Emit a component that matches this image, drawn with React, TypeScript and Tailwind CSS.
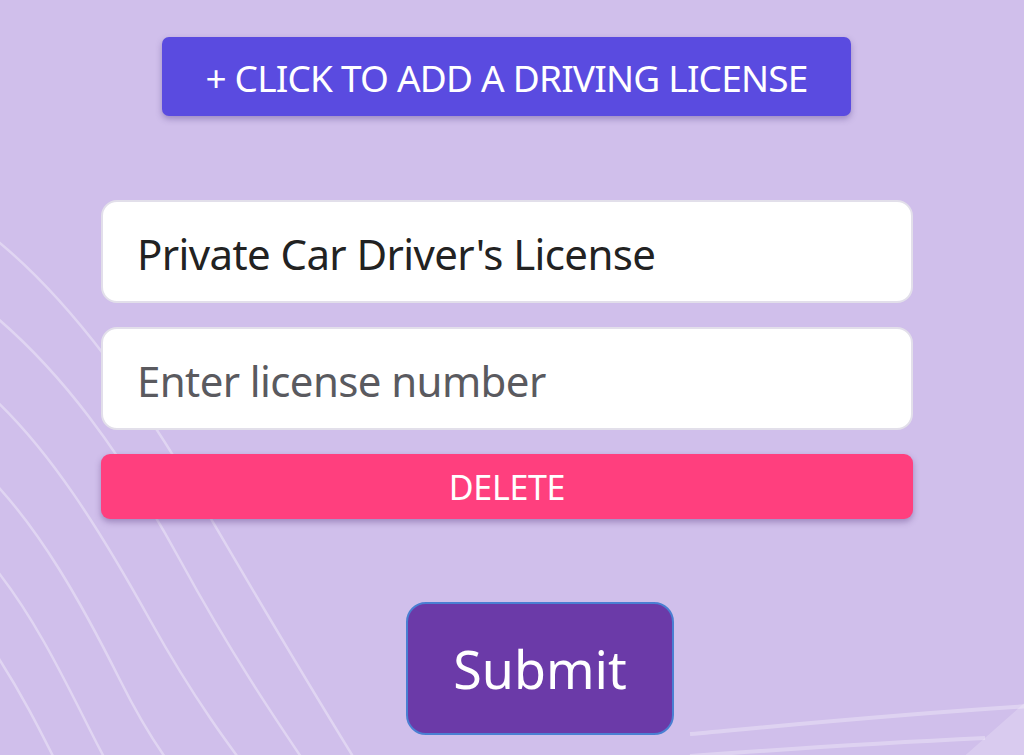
import React, { useState } from "react";

function Waves() {
  return (
    <svg className="pointer-events-none absolute inset-0 h-full w-full" viewBox="0 0 1024 755" preserveAspectRatio="none">
      <g fill="none" stroke="#ffffff" strokeOpacity="0.35" strokeWidth="2.5">
        <path d="M-10 235 C 60 290, 130 380, 200 500 S 330 720, 380 800" />
        <path d="M-10 312 C 60 370, 120 450, 180 560 S 290 740, 330 800" />
        <path d="M-10 395 C 50 450, 100 530, 150 620 S 240 760, 270 800" />
        <path d="M-10 478 C 40 530, 80 600, 120 680 S 190 790, 210 810" />
        <path d="M-10 562 C 30 610, 60 670, 90 730 S 130 800, 150 820" />
        <path d="M-10 645 C 20 690, 40 730, 60 770" />
      </g>
      <g fill="none" stroke="#ffffff" strokeOpacity="0.3" strokeWidth="4">
        <path d="M690 734 C 800 724, 900 714, 1030 706" />
        <path d="M690 756 C 800 748, 900 742, 985 738" />
      </g>
      <path d="M960 760 L 1030 698 L 1030 760 Z" fill="#ffffff" fillOpacity="0.2" />
    </svg>
  );
}

export default function App() {
  const [number, setNumber] = useState("");

  return (
    <div className="relative h-[755px] w-full overflow-hidden bg-[#d0bfeb] font-['Noto_Sans',sans-serif]">
      <Waves />
      <div className="relative flex flex-col items-start pt-[37px]">
        <button className="ml-[162px] flex h-[79px] w-[689px] items-center justify-center rounded-[7px] bg-[#5a4be0] pt-[2px] text-[37px] tracking-[-0.8px] text-white shadow-[0_3px_6px_rgba(60,40,120,0.35)]">
          + CLICK TO ADD A DRIVING LICENSE
        </button>

        <div className="ml-[101px] mt-[84px] flex w-[812px] flex-col gap-[24px]">
          <div className="flex h-[103px] items-center rounded-[16px] border-2 border-[#e2dfea] bg-white px-[34px] pt-[4px] text-[42px] tracking-[-0.6px] text-[#222222]">
            Private Car Driver's License
          </div>
          <input
            value={number}
            onChange={(e) => setNumber(e.target.value)}
            placeholder="Enter license number"
            className="h-[103px] rounded-[16px] border-2 border-[#e2dfea] bg-white px-[34px] pt-[4px] text-[42px] tracking-[-0.6px] text-[#222222] outline-none placeholder:text-[#5a5a5f]"
          />
          <button className="flex h-[65px] items-center justify-center rounded-[9px] bg-[#ff3f7e] pt-[2px] text-[34px] tracking-[-0.3px] text-white shadow-[0_3px_6px_rgba(80,50,120,0.4)]">
            DELETE
          </button>
        </div>

        <button className="ml-[406px] mt-[83px] flex h-[133px] w-[268px] items-center justify-center rounded-[20px] border-2 border-[#4a7fd2] bg-[#6b3aa8] text-[52px] text-white">
          Submit
        </button>
      </div>
    </div>
  );
}
